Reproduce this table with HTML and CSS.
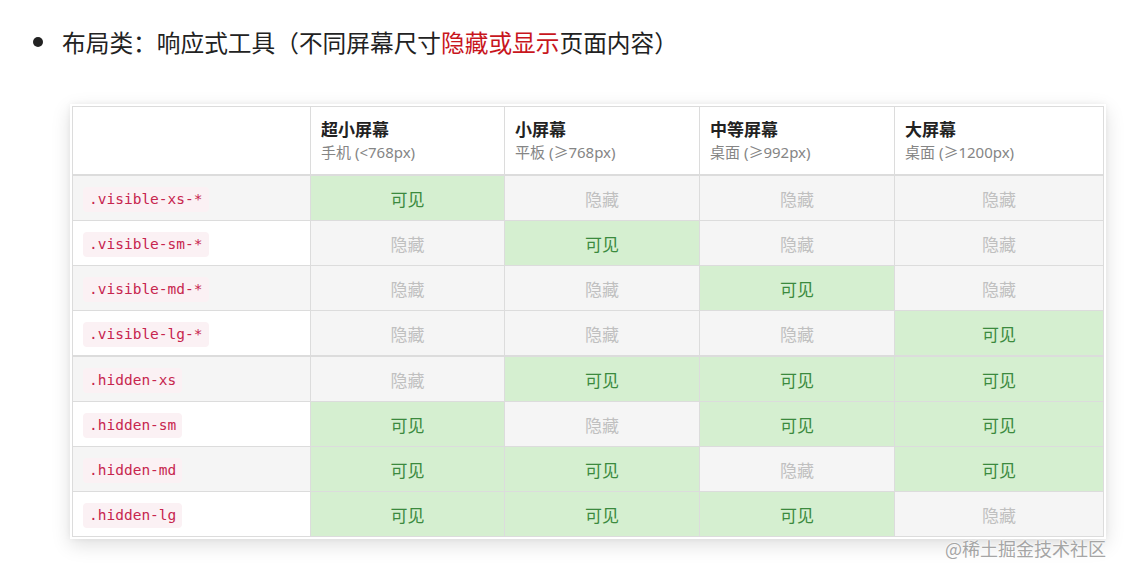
FILE: index.html
```html
<!DOCTYPE html>
<html lang="zh-CN">
<head>
<meta charset="utf-8">
<title>响应式工具</title>
<link rel="stylesheet" href="styles.css">
</head>
<body>
<div class="page">
  <div class="heading">
    <span class="dot"></span>
    <span class="heading-text">布局类：响应式工具（不同屏幕尺寸<span class="red">隐藏或显示</span>页面内容）</span>
  </div>
  <div class="figure">
    <div class="frame">
      <table class="grid">
        <colgroup>
          <col class="c1"><col class="c2"><col class="c3"><col class="c4"><col class="c5">
        </colgroup>
        <thead>
          <tr>
            <th></th>
            <th><div class="t">超小屏幕</div><div class="s">手机 (&lt;768px)</div></th>
            <th><div class="t">小屏幕</div><div class="s">平板 (≥768px)</div></th>
            <th><div class="t">中等屏幕</div><div class="s">桌面 (≥992px)</div></th>
            <th><div class="t">大屏幕</div><div class="s">桌面 (≥1200px)</div></th>
          </tr>
        </thead>
        <tbody>
          <tr class="odd"><td class="name"><code>.visible-xs-*</code></td><td class="on">可见</td><td class="off">隐藏</td><td class="off">隐藏</td><td class="off">隐藏</td></tr>
          <tr><td class="name"><code>.visible-sm-*</code></td><td class="off">隐藏</td><td class="on">可见</td><td class="off">隐藏</td><td class="off">隐藏</td></tr>
          <tr class="odd"><td class="name"><code>.visible-md-*</code></td><td class="off">隐藏</td><td class="off">隐藏</td><td class="on">可见</td><td class="off">隐藏</td></tr>
          <tr><td class="name"><code>.visible-lg-*</code></td><td class="off">隐藏</td><td class="off">隐藏</td><td class="off">隐藏</td><td class="on">可见</td></tr>
        </tbody>
        <tbody class="second">
          <tr class="odd"><td class="name"><code>.hidden-xs</code></td><td class="off">隐藏</td><td class="on">可见</td><td class="on">可见</td><td class="on">可见</td></tr>
          <tr><td class="name"><code>.hidden-sm</code></td><td class="on">可见</td><td class="off">隐藏</td><td class="on">可见</td><td class="on">可见</td></tr>
          <tr class="odd"><td class="name"><code>.hidden-md</code></td><td class="on">可见</td><td class="on">可见</td><td class="off">隐藏</td><td class="on">可见</td></tr>
          <tr><td class="name"><code>.hidden-lg</code></td><td class="on">可见</td><td class="on">可见</td><td class="on">可见</td><td class="off">隐藏</td></tr>
        </tbody>
      </table>
    </div>
    <div class="watermark">@稀土掘金技术社区</div>
  </div>
</div>
</body>
</html>
```

FILE: styles.css
```css
html, body {
  margin: 0;
  padding: 0;
  background: #ffffff;
}

body {
  font-family: "Noto Sans", "Noto Sans CJK SC", sans-serif;
  color: #333;
}

.page {
  width: 1127px;
  height: 578px;
  position: relative;
  overflow: hidden;
}

.heading {
  display: flex;
  align-items: center;
  padding: 26px 0 0 33px;
  height: 32px;
}

.dot {
  width: 10px;
  height: 10px;
  border-radius: 50%;
  background: #222;
  margin-right: 19px;
  flex: none;
}

.heading-text {
  font-family: "Noto Sans CJK SC", sans-serif;
  font-size: 23.7px;
  line-height: 32px;
  color: #222;
  letter-spacing: 0;
}

.red {
  color: #c8161d;
}

.figure {
  position: relative;
  margin: 46px 0 0 70px;
  width: 1036px;
}

.frame {
  background: #fff;
  padding: 2px;
  box-shadow: 0 6px 18px rgba(0, 0, 0, 0.13), 0 0 6px rgba(0, 0, 0, 0.05);
}

.grid {
  border-collapse: collapse;
  width: 1031px;
  table-layout: fixed;
  border: 1px solid #dcdcdc;
  font-family: "Noto Sans", "Noto Sans CJK SC", sans-serif;
}

.c1 { width: 238px; }
.c2 { width: 194px; }
.c3 { width: 195px; }
.c4 { width: 195px; }
.c5 { width: 209px; }

.grid th,
.grid td {
  border: 1px solid #dcdcdc;
  padding: 0 10px;
}

.grid th {
  text-align: left;
  vertical-align: top;
  padding-top: 10px;
  padding-bottom: 10px;
  height: 47px;
  background: #fff;
  border-bottom: 2px solid #dcdcdc;
}

.t {
  font-family: "Noto Sans CJK SC", sans-serif;
  font-weight: 700;
  font-size: 17px;
  line-height: 24px;
  color: #222;
}

.s {
  font-size: 15px;
  line-height: 23px;
  font-weight: 400;
  color: #858585;
}

.grid td {
  height: 44px;
  text-align: center;
  font-family: "Noto Sans CJK SC", sans-serif;
  font-size: 17px;
}

.second {
  border-top: 2px solid #dcdcdc;
}

.grid td.name {
  text-align: left;
  background: #fff;
}

.odd td.name {
  background: #f5f5f5;
}

.on {
  background: #d5efd0;
  color: #3b8a3e;
}

.off {
  background: #f5f5f5;
  color: #c0c0c0;
}

code {
  font-family: "DejaVu Sans Mono", monospace;
  font-size: 14.5px;
  line-height: 17px;
  color: #c7254e;
  background: #fbf1f4;
  padding: 4px 6px;
  border-radius: 4px;
  display: inline-block;
}

.watermark {
  position: absolute;
  right: 0;
  bottom: -20px;
  font-family: "Noto Sans CJK SC", sans-serif;
  font-size: 18px;
  line-height: 22px;
  color: #a5a5a5;
  text-shadow: 0 0 2px #fff, 0 0 2px #fff;
}
```
